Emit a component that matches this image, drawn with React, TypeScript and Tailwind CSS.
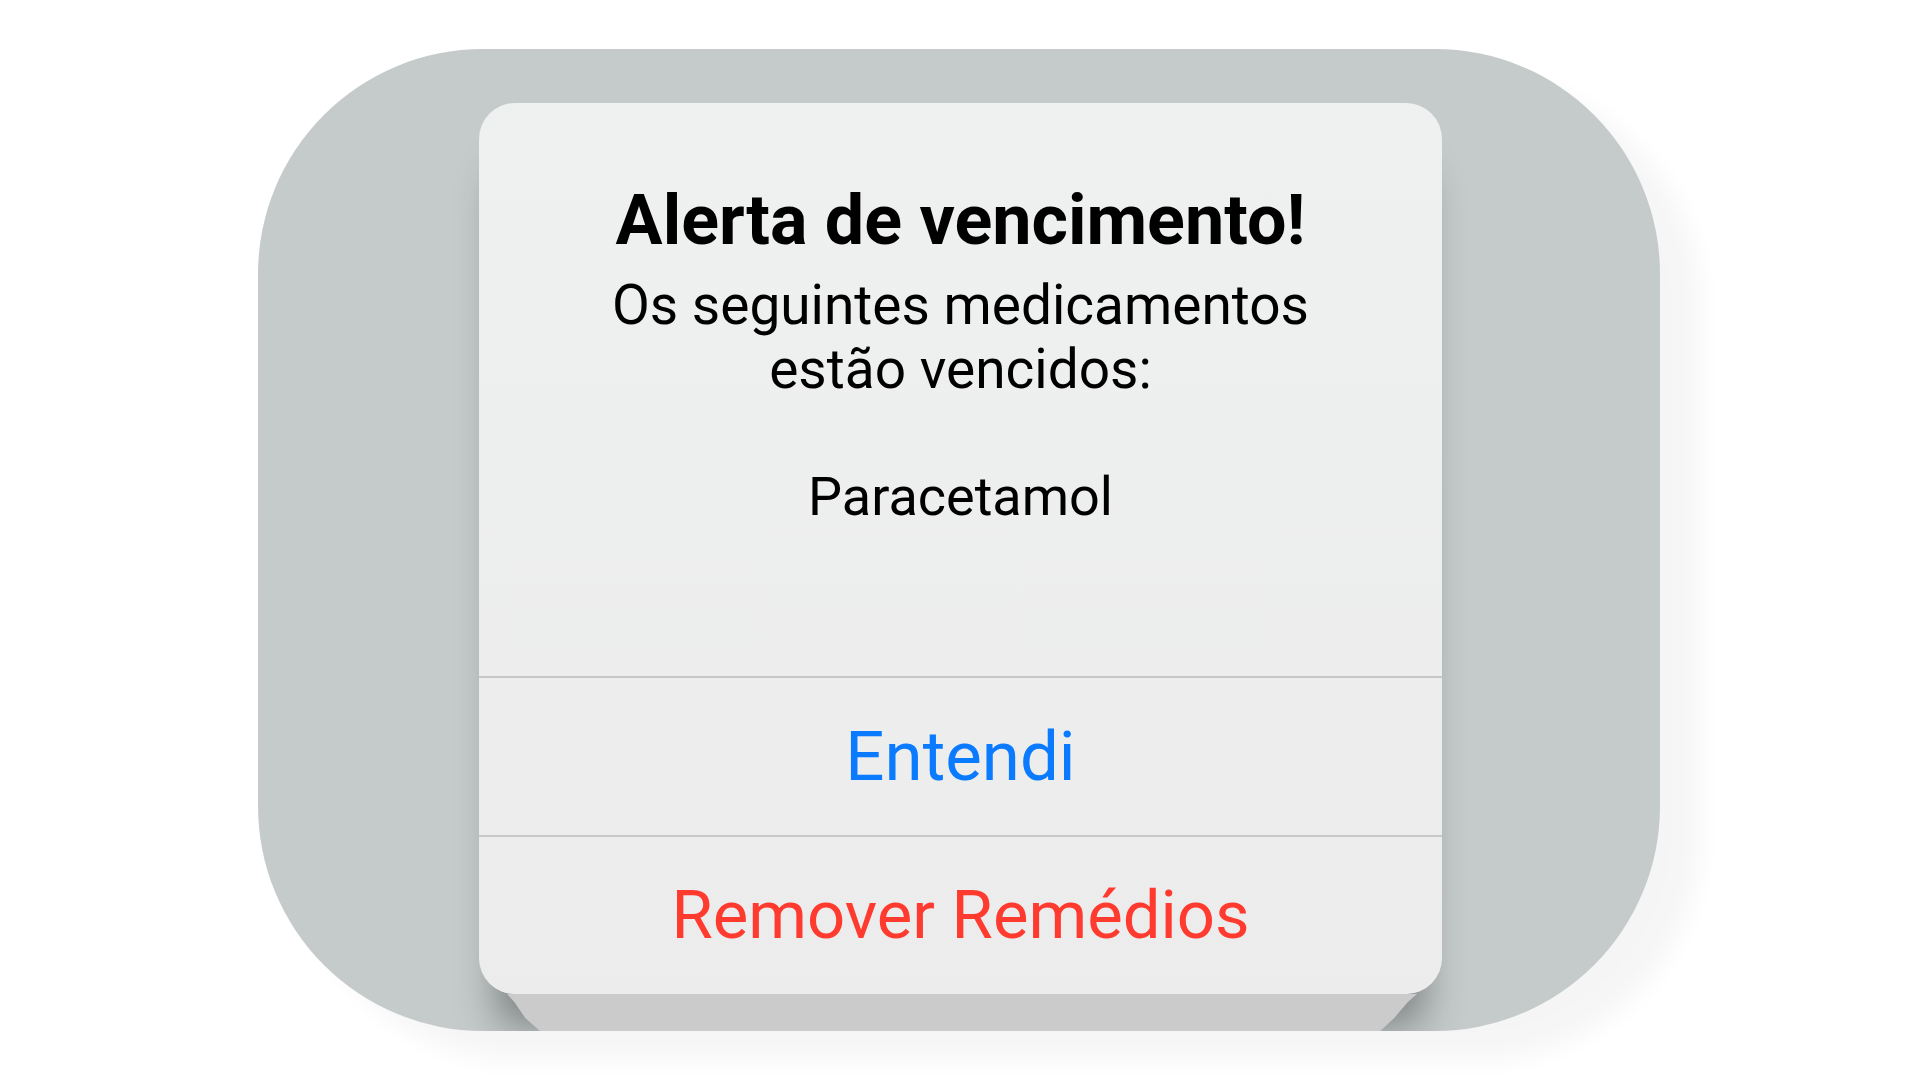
import React from 'react';

const font = { fontFamily: 'Roboto, "Noto Sans", Arial, sans-serif' };

const ExpiryAlert: React.FC = () => {
  return (
    <div className="flex flex-col w-[963px]">
      <div className="flex flex-col h-[891px] rounded-[36px] bg-gradient-to-b from-[#eff0f0] to-[#ececec] shadow-[0_50px_40px_-18px_rgba(0,0,0,0.38)] overflow-hidden">
        <div className="flex flex-col items-center h-[573px] pt-[77px] text-black text-center">
          <h1 className="text-[70px] leading-[80px] font-bold">Alerta de vencimento!</h1>
          <p className="mt-[13px] text-[55px] leading-[64px]">
            Os seguintes medicamentos
            <br />
            estão vencidos:
          </p>
          <p className="mt-[64px] text-[54px] leading-[64px]">Paracetamol</p>
        </div>
        <div className="h-[2px] bg-[#c8c8c8]" />
        <button className="h-[157px] flex items-center justify-center text-[69px] leading-[69px] text-[#0a7aff]">
          Entendi
        </button>
        <div className="h-[2px] bg-[#c8c8c8]" />
        <button className="flex-1 flex items-center justify-center text-[67px] leading-[67px] text-[#ff3b30]">
          Remover Remédios
        </button>
      </div>
      <div className="ml-[28px] w-[910px] h-[40px] bg-[#cbcbcb] [clip-path:polygon(0_0,100%_0,99%_20%,97.5%_60%,95.6%_100%,4%_100%,2%_60%,0.8%_20%)]" />
    </div>
  );
};

export default function App() {
  return (
    <div className="w-full h-[1080px] bg-white overflow-hidden" style={font}>
      <div className="ml-[258px] mt-[49px] w-[1402px] h-[982px] rounded-[225px] bg-[#c5cbcb] overflow-hidden shadow-[40px_30px_25px_rgba(0,0,0,0.04)]">
        <div className="pt-[54px] pl-[221px]">
          <ExpiryAlert />
        </div>
      </div>
    </div>
  );
}
